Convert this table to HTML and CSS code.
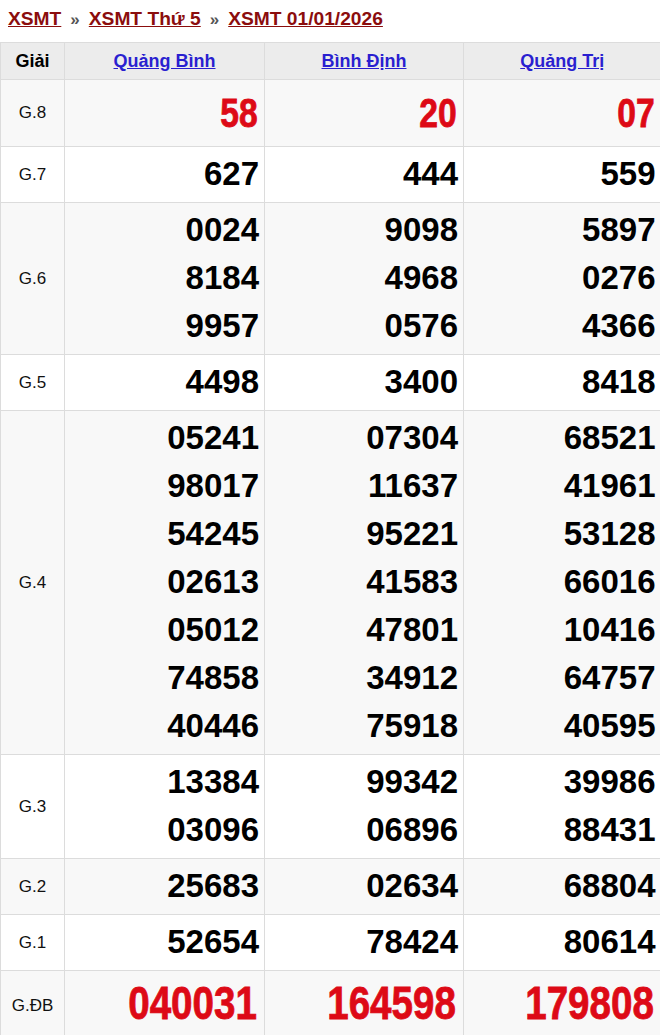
FILE: index.html
```html
<!DOCTYPE html>
<html lang="vi">
<head>
<meta charset="utf-8">
<title>XSMT 01/01/2026</title>
<link rel="stylesheet" href="styles.css">
</head>
<body>
<div class="crumbs">
  <a href="#">XSMT</a><span class="sep">»</span><a href="#">XSMT Thứ 5</a><span class="sep">»</span><a href="#">XSMT 01/01/2026</a>
</div>
<table class="kq">
  <colgroup><col class="c0"><col class="c1"><col class="c2"><col class="c3"></colgroup>
  <thead>
    <tr><th>Giải</th><th><a href="#">Quảng Bình</a></th><th><a href="#">Bình Định</a></th><th><a href="#">Quảng Trị</a></th></tr>
  </thead>
  <tbody>
    <tr class="alt big"><td class="g">G.8</td><td class="n red"><span class="v">58</span></td><td class="n red"><span class="v">20</span></td><td class="n red"><span class="v">07</span></td></tr>
    <tr><td class="g">G.7</td><td class="n">627</td><td class="n">444</td><td class="n">559</td></tr>
    <tr class="alt"><td class="g">G.6</td><td class="n">0024<br>8184<br>9957</td><td class="n">9098<br>4968<br>0576</td><td class="n">5897<br>0276<br>4366</td></tr>
    <tr><td class="g">G.5</td><td class="n">4498</td><td class="n">3400</td><td class="n">8418</td></tr>
    <tr class="alt"><td class="g">G.4</td><td class="n">05241<br>98017<br>54245<br>02613<br>05012<br>74858<br>40446</td><td class="n">07304<br>11637<br>95221<br>41583<br>47801<br>34912<br>75918</td><td class="n">68521<br>41961<br>53128<br>66016<br>10416<br>64757<br>40595</td></tr>
    <tr><td class="g">G.3</td><td class="n">13384<br>03096</td><td class="n">99342<br>06896</td><td class="n">39986<br>88431</td></tr>
    <tr class="alt"><td class="g">G.2</td><td class="n">25683</td><td class="n">02634</td><td class="n">68804</td></tr>
    <tr><td class="g">G.1</td><td class="n">52654</td><td class="n">78424</td><td class="n">80614</td></tr>
    <tr class="alt db"><td class="g">G.ĐB</td><td class="n red"><span class="v">040031</span></td><td class="n red"><span class="v">164598</span></td><td class="n red"><span class="v">179808</span></td></tr>
  </tbody>
</table>
</body>
</html>
```
FILE: styles.css
```css
html, body {
  margin: 0;
  padding: 0;
  background: #fff;
  font-family: "Liberation Sans", Arial, sans-serif;
  color: #000;
}
.crumbs {
  padding: 6px 8px 0 8px;
  height: 36px;
  box-sizing: border-box;
  font-size: 19.2px;
  font-weight: bold;
  line-height: 26px;
  white-space: nowrap;
}
.crumbs a {
  color: #8b0d0d;
  text-decoration: underline;
}
.crumbs .sep {
  color: #555;
  margin: 0 9px;
  font-size: 17px;
}
.kq {
  width: 660px;
  border-collapse: collapse;
  table-layout: fixed;
  margin-top: 6px;
}
.c0 { width: 64px; }
.c1 { width: 200px; }
.c2 { width: 199px; }
.c3 { width: 197px; }
.kq th, .kq td {
  border: 1px solid #dcdcdc;
  padding: 0;
}
.kq tr > :last-child { border-right: none; }
.kq th {
  background: #ececec;
  height: 36px;
  font-size: 18px;
  font-weight: bold;
  text-align: center;
  vertical-align: middle;
}
.kq th a {
  color: #2a1fd0;
  text-decoration: underline;
}
.kq tr.alt td { background: #f8f8f8; }
.kq td.g {
  text-align: center;
  font-size: 17px;
  vertical-align: middle;
  color: #111;
}
.kq td.n {
  text-align: right;
  font-size: 33px;
  font-weight: bold;
  line-height: 48px;
  padding: 3px 5px 4px 0;
  vertical-align: middle;
}
.kq tr.big td.n {
  font-size: 41px;
  line-height: 58px;
  padding: 4px 6px 4px 0;
}
.kq tr.db td.n {
  font-size: 47px;
  line-height: 58px;
  padding: 3px 7px 8px 0;
}
.kq td.red {
  color: #dd0a16;
}
.kq td.red .v {
  display: inline-block;
  transform: scaleX(0.82);
  transform-origin: right center;
  -webkit-text-stroke: 0.8px #dd0a16;
}
```
